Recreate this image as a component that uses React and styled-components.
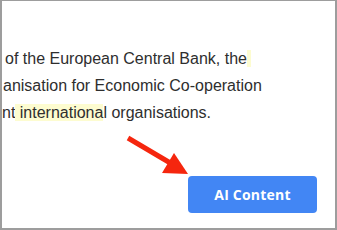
import React from 'react'
import styled, { createGlobalStyle } from 'styled-components'

const GlobalStyle = createGlobalStyle`
  html, body { margin: 0; padding: 0; background: #fff; }
  body { width: 337px; height: 230px; overflow: hidden; }
`

const Frame = styled.div`
  box-sizing: border-box;
  width: 337px;
  height: 230px;
  border: solid #9d9d9d;
  border-width: 1px 2px 2px 2px;
  background: #fff;
  position: relative;
  overflow: hidden;
  display: flex;
  flex-direction: column;
`

const Text = styled.div`
  margin-top: 44px;
  font-family: "Liberation Sans", Arial, sans-serif;
  font-size: 16px;
  line-height: 27px;
  color: #2e2e2e;
`

const Line = styled.div`
  white-space: nowrap;
  padding-left: ${p => p.$offset}px;
`

const Mark = styled.span`
  background: #fdfcd0;
`

const Footer = styled.div`
  margin-top: auto;
  display: flex;
  justify-content: flex-end;
  padding: 0 18px 15px 0;
`

const Button = styled.button`
  width: 129px;
  height: 37px;
  border: none;
  border-radius: 4px;
  background: #4286f4;
  color: #fff;
  font-family: "Open Sans", sans-serif;
  font-weight: 700;
  font-size: 14px;
  letter-spacing: 0.2px;
  cursor: pointer;
`

const Arrow = styled.svg`
  position: absolute;
  left: 0;
  top: 0;
  pointer-events: none;
`

export default function App() {
  return (
    <>
      <GlobalStyle />
      <Frame>
        <Text>
          <Line $offset={3}>of the European Central Bank, the<Mark>&nbsp;</Mark></Line>
          <Line $offset={1}>anisation for Economic Co-operation</Line>
          <Line $offset={0}>nt<Mark> internationa</Mark>l organisations.</Line>
        </Text>
        <Footer>
          <Button>AI Content</Button>
        </Footer>
        <Arrow width="337" height="230" viewBox="0 0 337 230">
          <line x1="126" y1="137" x2="170" y2="163" stroke="#f5260e" strokeWidth="5" strokeLinecap="butt" />
          <polygon points="186,173 160,172 172,152" fill="#f5260e" />
        </Arrow>
      </Frame>
    </>
  )
}
